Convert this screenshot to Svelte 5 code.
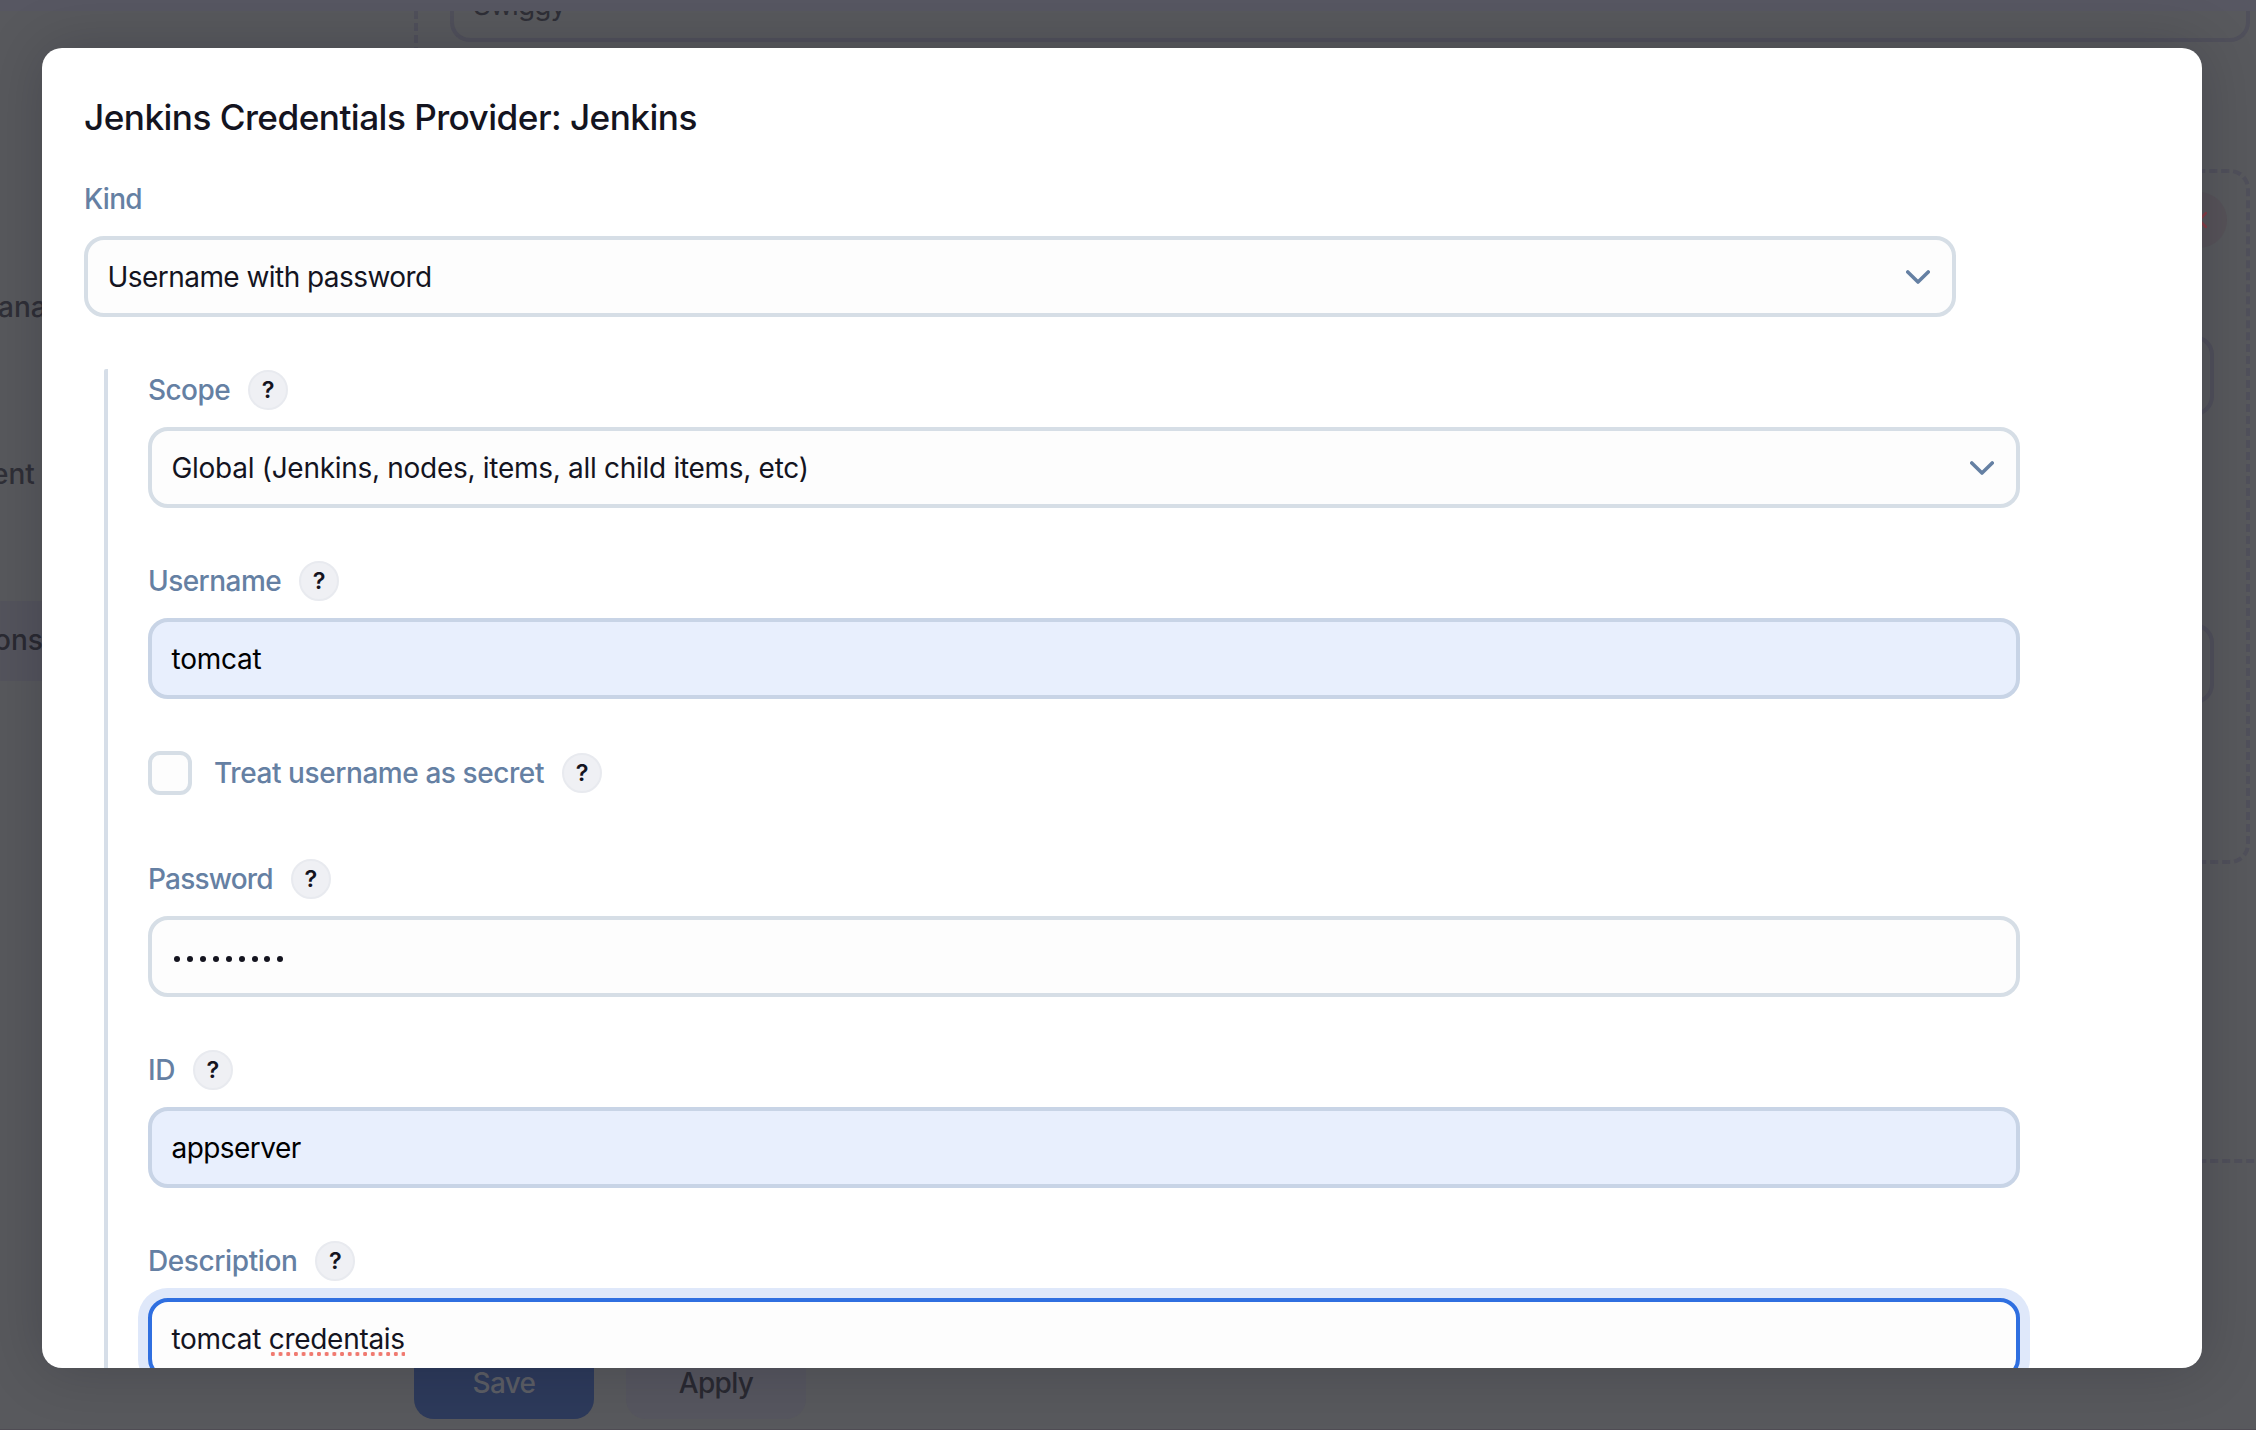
<script>
  const fields = [
    { label: 'Scope', labelTracking: -0.58, kind: 'select', value: 'Global (Jenkins, nodes, items, all child items, etc)', tracking: -0.29 },
    { label: 'Username', labelTracking: -0.55, kind: 'filled', value: 'tomcat', tracking: -0.25 },
    { label: 'Treat username as secret', labelTracking: -0.42, kind: 'check' },
    { label: 'Password', labelTracking: -0.8, kind: 'password', length: 9 },
    { label: 'ID', labelTracking: -0.5, kind: 'filled', value: 'appserver', tracking: -0.55 },
    { label: 'Description', labelTracking: -0.4, kind: 'focused', value: 'tomcat', misspelled: 'credentais', tracking: -0.29 }
  ];
</script>

{#snippet chevron()}
  <svg class="chevron" width="24" height="14" viewBox="0 0 24 14" fill="none">
    <path d="M1.8 2 12 12 22.2 2" stroke="currentColor" stroke-width="3.6" stroke-linecap="round" stroke-linejoin="round" />
  </svg>
{/snippet}

<div class="screen">
  <div class="topbar"></div>
  <div class="page">
    <nav class="sidebar">
      <span class="item">ana</span>
      <span class="item ent">ent</span>
      <span class="item active">ons</span>
    </nav>
    <main class="main">
      <section class="stage">
        <div class="bg-input named"><span>Swiggy</span></div>
        <div class="container-box">
          <div class="remove">
            <svg width="16" height="16" viewBox="0 0 16 16"><path d="M1 1 15 15M15 1 1 15" stroke="currentColor" stroke-width="2.6" stroke-linecap="round" /></svg>
          </div>
          <div class="bg-input"></div>
          <div class="bg-input"></div>
        </div>
      </section>
      <div class="actions">
        <span class="btn primary">Save</span>
        <span class="btn">Apply</span>
      </div>
    </main>
  </div>
  <div class="baseline"></div>

  <div class="modal">
    <h1>Jenkins Credentials Provider: Jenkins</h1>
    <div class="label kind">Kind</div>
    <div class="control kind-select"><span>Username with password</span>{@render chevron()}</div>

    <div class="nested">
      {#each fields as f}
        <div class="field" class:check={f.kind === 'check'}>
          <div class="label">
            {#if f.kind === 'check'}<span class="box"></span>{/if}
            <span style:letter-spacing="{f.labelTracking}px">{f.label}</span>
            <span class="help">?</span>
          </div>
          {#if f.kind !== 'check'}
            <div class="control {f.kind}">
              {#if f.kind === 'password'}
                <span class="dots">{#each Array(f.length) as _}<i></i>{/each}</span>
              {:else}
                <span style:letter-spacing="{f.tracking}px">{f.value}{#if f.misspelled}{' '}<span class="typo">{f.misspelled}</span>{/if}</span>
              {/if}
              {#if f.kind === 'select'}{@render chevron()}{/if}
            </div>
          {/if}
        </div>
      {/each}
    </div>
  </div>
</div>

<style>
  :global(body) { margin: 0; background: #58595d; }
  .screen, .screen * { box-sizing: border-box; }
  .screen {
    position: relative;
    width: 2256px;
    height: 1430px;
    overflow: hidden;
    display: flex;
    flex-direction: column;
    background: #58595d;
    font-family: Inter, "Liberation Sans", sans-serif;
    font-size: 28px;
    line-height: 40px;
    color: #14141f;
  }
  .topbar { height: 11px; flex: none; background: #575762; }
  .page { flex: 1; min-height: 0; display: flex; color: #2f2f37; }
  .baseline { height: 1px; flex: none; background: #4f4c54; }

  .sidebar { width: 414px; flex: none; padding-top: 256px; display: flex; flex-direction: column; gap: 87px; font-weight: 500; }
  .item { height: 80px; line-height: 80px; margin-left: -2px; }
  .item.ent { margin-left: -8px; }
  .item.active { margin-left: 0; background: #54545d; text-indent: -6px; line-height: 79px; color: #2a2a32; }

  .main { width: 1842px; flex: none; overflow: hidden; }
  .stage {
    width: 1900px;
    height: 1152px;
    padding-left: 32px;
    border: 4px dashed #50505b;
    border-width: 0 0 4px 4px;
  }
  .bg-input { width: 1764px; height: 81px; border: 4px solid #50505b; border-radius: 20px; }
  .bg-input.named { width: 1800px; height: 31px; border-top: 0; border-radius: 0 0 20px 20px; overflow: hidden; padding-left: 19px; }
  .named span { display: block; margin-top: -26px; line-height: 40px; letter-spacing: -0.9px; }
  .container-box {
    width: 1800px;
    height: 695px;
    margin-top: 127px;
    border: 4px dashed #50505b;
    border-radius: 20px;
    display: flex;
    flex-direction: column;
  }
  .container-box .bg-input { margin: 87px 0 0 -4px; flex: none; }
  .container-box .bg-input + .bg-input { margin-top: 207px; }
  .remove {
    width: 56px;
    height: 56px;
    margin: 19px 19px 0 auto;
    flex: none;
    border-radius: 50%;
    background: #575359;
    color: #843c46;
    display: grid;
    place-items: center;
  }
  .actions { display: flex; gap: 32px; padding-top: 176px; }
  .btn { width: 180px; height: 80px; line-height: 88px; border-radius: 20px; background: #56565f; text-align: center; font-weight: 500; letter-spacing: -0.7px; color: #292931; }
  .btn.primary { background: #2d3a5b; color: #5c5e65; }

  .modal {
    position: absolute;
    inset: 48px 54px 62px 42px;
    padding: 48px 42px 0;
    border-radius: 20px;
    overflow: hidden;
    background: #fff;
    box-shadow: 0 0 60px rgba(0, 0, 20, 0.2);
  }
  h1 { margin: 0; font-size: 35.2px; line-height: 42px; font-weight: 550; letter-spacing: -0.55px; }
  .label { display: flex; align-items: center; height: 40px; color: #6580a3; font-weight: 500; }
  .label.kind { margin: 41px 0 17px; letter-spacing: -0.75px; }
  .kind-select { letter-spacing: -0.55px; }
  .control {
    width: 1872px;
    height: 81px;
    padding: 0 22px 0 19.5px;
    display: flex;
    align-items: center;
    justify-content: space-between;
    border: 4px solid #d6dee6;
    border-radius: 20px;
    background: #fdfdfd;
  }
  .chevron { color: #6580a3; }
  .nested { margin: 52px 0 0 20px; padding: 1px 0 0 40px; border-left: 4px solid #d6dee8; border-radius: 2px; height: 1100px; }
  .field { height: 191px; }
  .field .control { margin-top: 17px; }
  .field.check { height: 108px; }
  .field.check .label { height: 44px; margin-top: -1px; }
  .check .box { width: 44px; height: 44px; margin-right: 22px; border: 4px solid #d6dee6; border-radius: 12px; background: #fdfdfd; }
  .help {
    width: 40px;
    height: 40px;
    margin-left: 18px;
    border: 2px solid #e8eaef;
    border-radius: 50%;
    background: #eff0f4;
    color: #14141f;
    font-size: 23.5px;
    line-height: 36px;
    font-weight: 600;
    text-align: center;
  }
  .filled { background: #e8effd; border-color: #c8d4e6; color: #000; }
  .focused { border-color: #2f6fe0; box-shadow: 0 0 0 10px #dfe8fa; }
  .dots { display: flex; gap: 6.9px; padding: 4px 0 0 2.7px; }
  .dots i { width: 6px; height: 6px; border-radius: 50%; background: #14141f; }
  .typo {
    background: radial-gradient(circle, #f07a70 1.9px, transparent 2.4px) left bottom / 7.7px 4px repeat-x;
  }
</style>
